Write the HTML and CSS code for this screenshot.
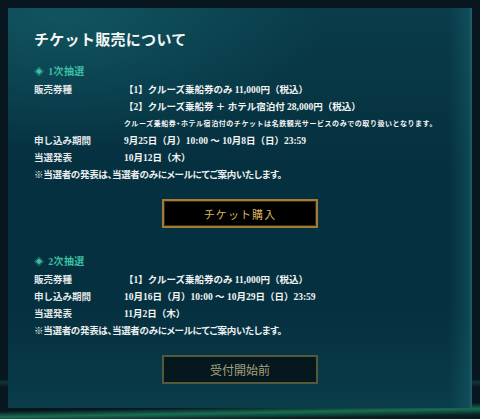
FILE: index.html
```html
<!DOCTYPE html>
<html lang="ja">
<head>
<meta charset="utf-8">
<title>チケット販売について</title>
<link rel="stylesheet" href="styles.css">
</head>
<body>
<div class="stage">
  <section class="panel">
    <h1 class="title">チケット販売について</h1>

    <div class="round">
      <h2 class="round-head"><span class="mark">◈</span>1次抽選</h2>
      <div class="rows">
        <div class="label">販売券種</div>
        <div class="value">【1】クルーズ乗船券のみ 11,000円（税込）</div>
        <div class="label"></div>
        <div class="value">【2】クルーズ乗船券 ＋ ホテル宿泊付 28,000円（税込）</div>
        <div class="label"></div>
        <div class="value note">クルーズ乗船券+ホテル宿泊付のチケットは名鉄観光サービスのみでの取り扱いとなります。</div>
        <div class="label">申し込み期間</div>
        <div class="value">9月25日（月）10:00 ～ 10月8日（日）23:59</div>
        <div class="label">当選発表</div>
        <div class="value">10月12日（木）</div>
        <div class="full">※当選者の発表は、当選者のみにメールにてご案内いたします。</div>
      </div>
      <div class="btn-wrap">
        <a class="btn btn-buy" href="#">チケット購入</a>
      </div>
    </div>

    <div class="round round-2">
      <h2 class="round-head"><span class="mark">◈</span>2次抽選</h2>
      <div class="rows">
        <div class="label">販売券種</div>
        <div class="value">【1】クルーズ乗船券のみ 11,000円（税込）</div>
        <div class="label">申し込み期間</div>
        <div class="value">10月16日（月）10:00 ～ 10月29日（日）23:59</div>
        <div class="label">当選発表</div>
        <div class="value">11月2日（木）</div>
        <div class="full">※当選者の発表は、当選者のみにメールにてご案内いたします。</div>
      </div>
      <div class="btn-wrap">
        <span class="btn btn-wait">受付開始前</span>
      </div>
    </div>
  </section>
</div>
</body>
</html>
```
FILE: styles.css
```css
html, body {
  margin: 0;
  padding: 0;
}

body {
  width: 480px;
  height: 419px;
  overflow: hidden;
  background:
    linear-gradient(179deg, transparent 0 96.2%, rgba(30, 140, 100, 0.75) 97.6%, rgba(10, 50, 45, 0.4) 99%, transparent 100%),
    linear-gradient(180deg, transparent 0 90.5%, rgba(25, 75, 80, 0.55) 91.2%, transparent 92.5%),
    #07161f;
  font-family: "Liberation Serif", "Noto Sans CJK JP", serif;
  color: #eef0f0;
}

.stage {
  padding: 8px;
}

.panel {
  box-sizing: border-box;
  width: 464px;
  height: 400px;
  padding: 21px 26px 0;
  background:
    linear-gradient(to right, transparent 0 95%, rgba(30, 110, 120, 0.35) 99.3%, rgba(45, 125, 135, 0.6) 100%),
    radial-gradient(ellipse 70% 45% at 12% 0%, rgba(20, 95, 105, 0.7), transparent 80%),
    linear-gradient(180deg, #0a3c4a 0%, #05303f 40%, #05303f 75%, #0a3c49 100%);
}

.title {
  margin: 0;
  font-size: 15px;
  line-height: 22px;
  font-weight: 700;
  letter-spacing: 0.02em;
  color: #f4f6f6;
}

.round {
  margin-top: 12px;
}

.round-2 {
  margin-top: 25px;
}

.round-head {
  margin: 0 0 2px;
  font-size: 10px;
  line-height: 17px;
  font-weight: 700;
  color: #3cbfa4;
  letter-spacing: 0.03em;
}

.mark {
  display: inline-block;
  margin-right: 4px;
  font-size: 10px;
  font-weight: 400;
}

.rows {
  display: grid;
  grid-template-columns: 90px 1fr;
  font-size: 9.5px;
  line-height: 17px;
}

.label {
  color: #e4e8ea;
  font-weight: 700;
}

.value {
  color: #f2f4f4;
  font-weight: 700;
}

.note {
  font-size: 7px;
  letter-spacing: 0.08em;
  font-weight: 700;
}

.full {
  grid-column: 1 / -1;
  font-weight: 700;
  color: #eceff0;
  font-feature-settings: "palt";
  letter-spacing: -0.03em;
}

.btn-wrap {
  display: flex;
  justify-content: center;
  margin-top: 15px;
}

.btn {
  box-sizing: border-box;
  display: flex;
  align-items: center;
  justify-content: center;
  width: 156px;
  height: 29px;
  font-size: 11px;
  letter-spacing: 0.1em;
  text-decoration: none;
  font-family: "Noto Sans CJK JP", serif;
}

.btn-buy {
  background: #000;
  border: 2px solid #a07c35;
  box-shadow: inset 0 0 0 1px #3a2a0e;
  color: #dcb55e;
}

.btn-wait {
  background: #04181e;
  border: 2px solid #56583c;
  color: #a7a27c;
  font-size: 12px;
  letter-spacing: 0;
}
```
